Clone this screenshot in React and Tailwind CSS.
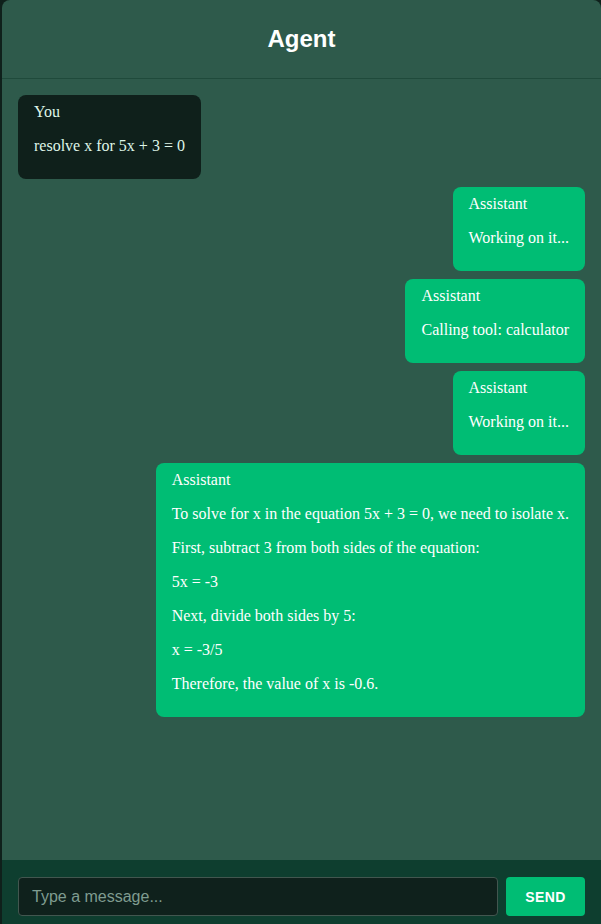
import { useState } from "react";

const messages = [
    { role: "user", label: "You", parts: ["resolve x for 5x + 3 = 0"] },
    { role: "assistant", label: "Assistant", parts: ["Working on it..."] },
    { role: "assistant", label: "Assistant", parts: ["Calling tool: calculator"] },
    { role: "assistant", label: "Assistant", parts: ["Working on it..."] },
    {
        role: "assistant",
        label: "Assistant",
        parts: [
            "To solve for x in the equation 5x + 3 = 0, we need to isolate x.",
            "First, subtract 3 from both sides of the equation:",
            "5x = -3",
            "Next, divide both sides by 5:",
            "x = -3/5",
            "Therefore, the value of x is -0.6.",
        ],
    },
];

function Bubble({ msg }) {
    const isUser = msg.role === "user";
    return (
        <div className={`flex ${isUser ? "justify-start" : "justify-end"}`}>
            <div
                className={`max-w-[80%] rounded-lg px-4 py-2 font-['Liberation_Serif',serif] text-base leading-[18px] ${
                    isUser ? "bg-[#0f201b] text-[#dff5e8]" : "bg-[#00bd74] text-white"
                }`}
            >
                <div>{msg.label}</div>
                {msg.parts.map((p, i) => (
                    <p key={i} className="my-4">{p}</p>
                ))}
            </div>
        </div>
    );
}

export default function App() {
    const [text, setText] = useState("");

    return (
        <div className="min-h-screen bg-[#0f201b] pl-[2px]">
            <div className="flex h-[932px] w-[599px] flex-col overflow-hidden rounded-lg bg-[#2e5a4b] font-['Liberation_Sans',Arial,sans-serif]">
                {/* Header */}
                <div className="flex h-[79px] shrink-0 items-center justify-center border-b border-[#1f4a3b]">
                    <h1 className="text-2xl font-bold text-white">Agent</h1>
                </div>

                {/* Messages */}
                <div className="flex flex-1 flex-col gap-2 p-4">
                    {messages.map((m, i) => (
                        <Bubble key={i} msg={m} />
                    ))}
                </div>

                {/* Input */}
                <div className="flex shrink-0 gap-2 bg-[#0e3e2f] p-4 pt-[17px]">
                    <input
                        value={text}
                        onChange={(e) => setText(e.target.value)}
                        placeholder="Type a message..."
                        className="h-[39px] flex-1 rounded border border-[#42564f] bg-[#0f211c] px-[13px] text-base text-white placeholder:text-[#7f9c90] outline-none"
                    />
                    <button className="h-[39px] w-[79px] rounded bg-[#00bd74] text-sm font-bold tracking-wide text-white">
                        SEND
                    </button>
                </div>
            </div>
        </div>
    );
}
